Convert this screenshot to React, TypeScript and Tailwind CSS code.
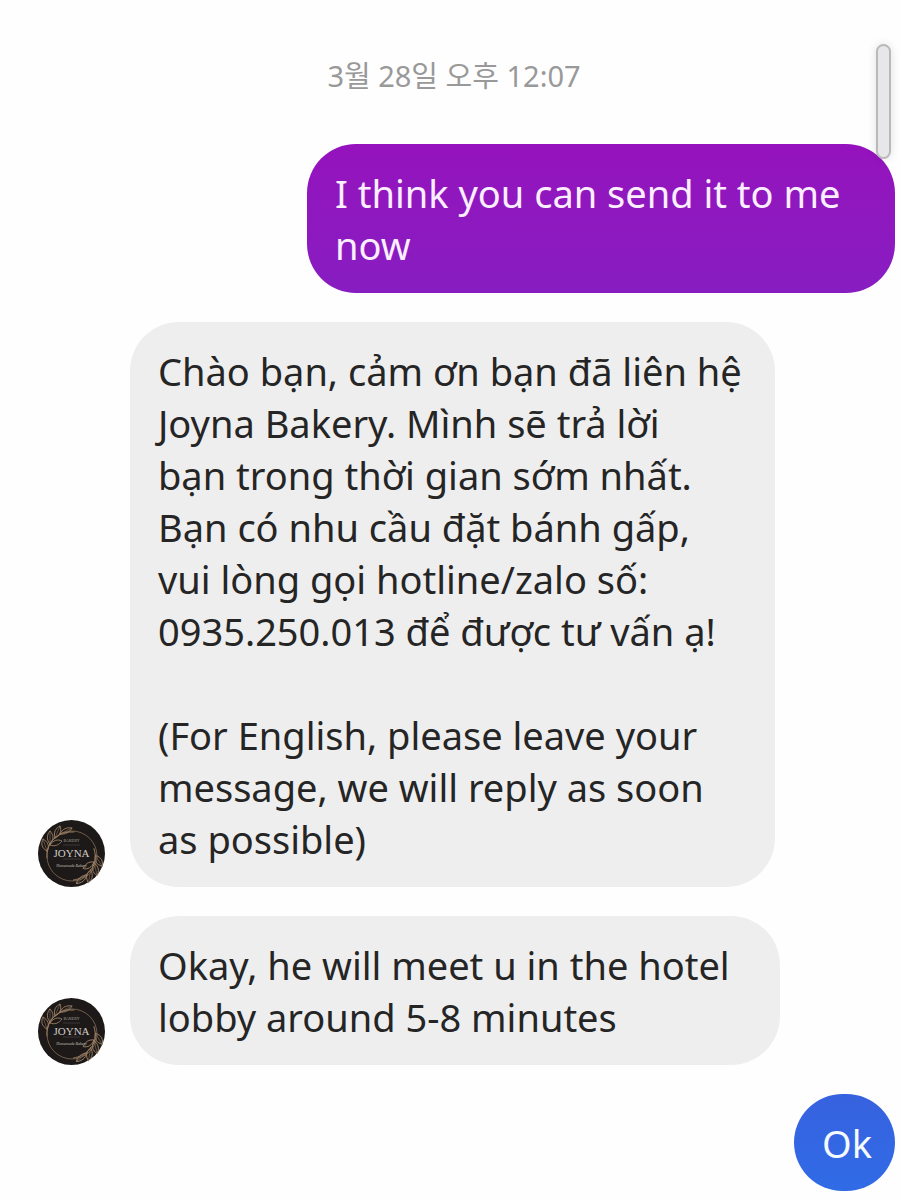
import React from 'react';

interface Message {
    id: number;
    mine: boolean;
    text: string;
    bubbleClass: string;
}

const messages: Message[] = [
    {
        id: 1,
        mine: true,
        text: 'I think you can send it to me\nnow',
        bubbleClass: 'w-[588px] bg-linear-to-b from-[#9512bd] to-[#871dc1] text-[#fbeeff]',
    },
    {
        id: 2,
        mine: false,
        text: 'Chào bạn, cảm ơn bạn đã liên hệ\nJoyna Bakery. Mình sẽ trả lời\nbạn trong thời gian sớm nhất.\nBạn có nhu cầu đặt bánh gấp,\nvui lòng gọi hotline/zalo số:\n0935.250.013 để được tư vấn ạ!\n\n(For English, please leave your\nmessage, we will reply as soon\nas possible)',
        bubbleClass: 'w-[645px] bg-[#eeeeee] text-[#252525]',
    },
    {
        id: 3,
        mine: false,
        text: 'Okay, he will meet u in the hotel\nlobby around 5-8 minutes',
        bubbleClass: 'w-[650px] bg-[#eeeeee] text-[#252525]',
    },
    {
        id: 4,
        mine: true,
        text: 'Ok',
        bubbleClass: 'w-[101px] bg-linear-to-b from-[#3762df] to-[#306be6] text-[#f4faff]',
    },
];

const Sprig: React.FC = () => (
    <g fill="none" stroke="#9c8064" strokeWidth="0.9" strokeLinecap="round">
        <path d="M9 38C8 29 12 20 20 16C25 12 30 12 36 12" />
        <path d="M9 31C3 28 3 23 5 19C10 22 12 26 9 31Z" />
        <path d="M12 24C8 20 9 14 12 11C16 15 16 20 12 24Z" />
        <path d="M17 18C15 12 18 8 22 6C24 11 22 16 17 18Z" />
        <path d="M22 14C24 9 29 7 34 8C32 12 27 15 22 14Z" />
        <path d="M12 25C15 20 20 19 24 21C21 25 17 27 12 25Z" />
        <path d="M5 19L9 31M12 11L12 24M22 6L17 18M34 8L22 14" strokeWidth="0.5" />
    </g>
);

const Avatar: React.FC = () => (
    <svg viewBox="0 0 67 67" className="size-[67px] shrink-0" role="img" aria-label="Joyna">
        <circle cx="33.5" cy="33.5" r="33.5" fill="#1d1918" />
        <circle cx="34" cy="36" r="25" fill="none" stroke="#77634f" strokeWidth="0.9" />
        <Sprig />
        <g transform="rotate(167 33 36)">
            <Sprig />
        </g>
        <path d="M25 25H42M25 39H42" stroke="#5f5a57" strokeWidth="0.5" />
        <text x="33.5" y="22" textAnchor="middle" fontSize="4" fill="#a5a09c" className="font-['Liberation_Serif',serif]">BAKERY</text>
        <text x="33.5" y="37" textAnchor="middle" fontSize="11" fill="#d0cdcb" className="font-['Liberation_Serif',serif]">JOYNA</text>
        <text x="33.5" y="47" textAnchor="middle" fontSize="4" fill="#c5c0bc" className="italic font-['Liberation_Serif',serif]">Homemade Bakery</text>
    </svg>
);

const MessageRow: React.FC<{ message: Message }> = ({ message }) => (
    <li className={`flex items-end gap-[25px] ${message.mine ? 'justify-end' : 'justify-start'}`}>
        {!message.mine && <Avatar />}
        <p className={`rounded-[49px] pt-[23px] pb-[22px] pl-7 text-[38px] leading-[52px] whitespace-pre ${message.bubbleClass}`}>
            {message.text}
        </p>
    </li>
);

const App: React.FC = () => {
    return (
        <main className="relative min-h-screen bg-[#fefefe] pt-[56px] pb-2 font-['Noto_Sans','Noto_Sans_CJK_KR',sans-serif]">
            <time className="block pl-2 text-center text-[29px] leading-10 text-[#999999]">3월 28일 오후 12:07</time>

            <ul className="mt-12 flex flex-col gap-[29px] pr-[5px] pl-[38px]">
                {messages.map(message => (
                    <MessageRow key={message.id} message={message} />
                ))}
            </ul>

            {/* Scroll thumb floating over the conversation */}
            <div className="absolute top-[44px] right-[9px] h-[115px] w-[15px] rounded-full border-2 border-[#b9b9b9] bg-[#e7e6e8] shadow-[0_0_10px_rgba(0,0,0,0.12)]" />
        </main>
    );
};

export default App;
